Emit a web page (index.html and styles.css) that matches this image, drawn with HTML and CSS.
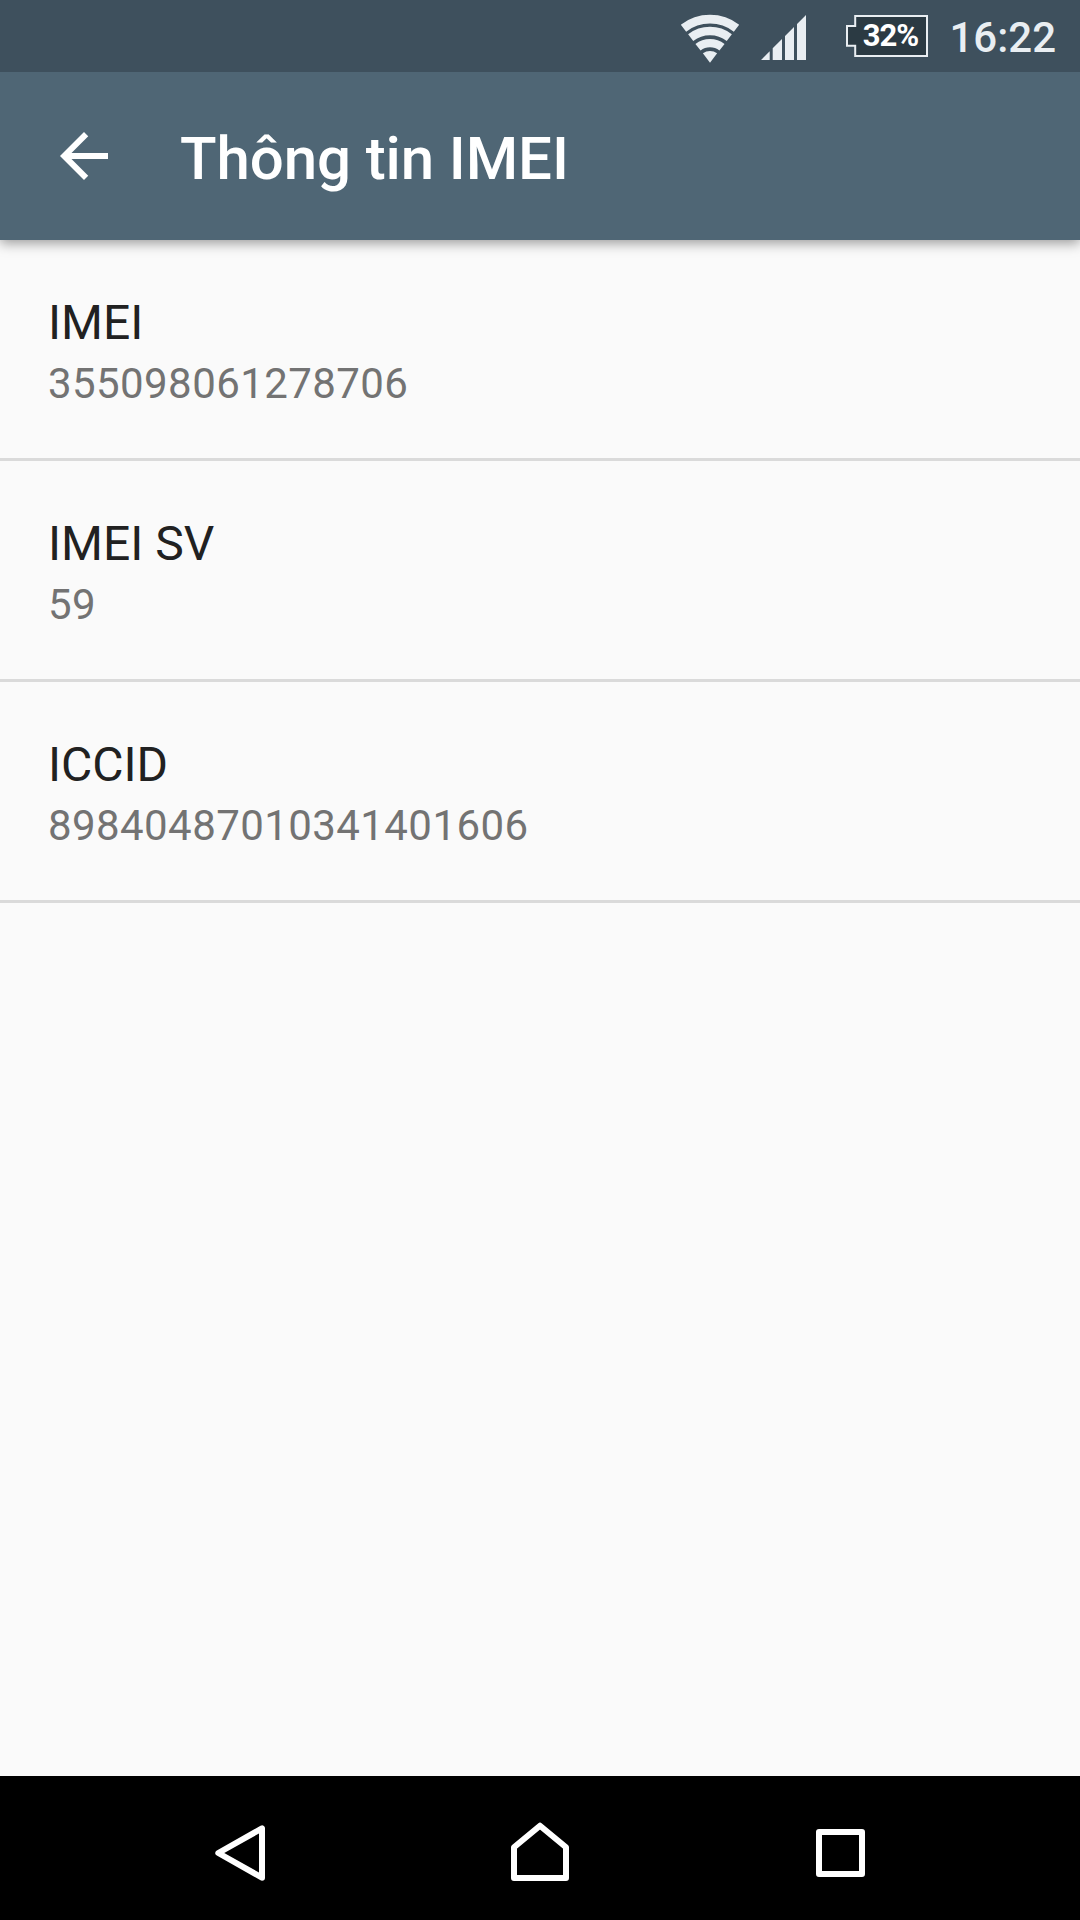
FILE: index.html
```html
<!DOCTYPE html>
<html lang="vi">
<head>
    <meta charset="UTF-8">
    <meta name="viewport" content="width=device-width, initial-scale=1.0">
    <title>Thông tin IMEI</title>
    <link rel="stylesheet" href="styles.css">
</head>
<body>

<div class="status-bar">
    <svg class="wifi" viewBox="0 0 60 50">
        <path class="arc" stroke-width="8.8" d="M3.5 14.2A43.5 43.5 0 0 1 56.5 14.2"/>
        <path class="arc" stroke-width="8.4" d="M10.7 23.6A31.7 31.7 0 0 1 49.3 23.6"/>
        <path class="arc" stroke-width="8.4" d="M18 33.2A19.6 19.6 0 0 1 42 33.2"/>
        <path d="M22.9 39.3A12 12 0 0 1 37.1 39.3L30 48.7Z"/>
    </svg>
    <svg class="signal" viewBox="0 0 46 46">
        <path d="M1 46L9.7 37.2V46ZM12.7 46V34.2L22 25V46ZM25 46V22L34 13V46ZM37 46V10L46 1V46Z"/>
    </svg>
    <div class="battery">
        <svg viewBox="0 0 82 42">
            <path d="M9.2 1H81V41H9.2V30.8H1V11H9.2Z"/>
        </svg>
        <span>32%</span>
    </div>
    <span class="clock">16:22</span>
</div>

<header>
    <svg class="back" viewBox="0 0 24 24">
        <path d="M20 11H7.83l5.59-5.59L12 4l-8 8 8 8 1.41-1.41L7.83 13H20v-2z"/>
    </svg>
    <h1>Thông tin IMEI</h1>
</header>

<main>
    <div class="item">
        <h2>IMEI</h2>
        <p>355098061278706</p>
    </div>
    <div class="item">
        <h2>IMEI SV</h2>
        <p>59</p>
    </div>
    <div class="item">
        <h2>ICCID</h2>
        <p>89840487010341401606</p>
    </div>
</main>

<nav>
    <a class="nav-button">
        <svg viewBox="0 0 72 72"><path d="M58 16.3V65.7L14.3 41Z"/></svg>
    </a>
    <a class="nav-button">
        <svg viewBox="0 0 72 72"><path d="M10 66V35.3L36 13.7L62 35.3V66Z"/></svg>
    </a>
    <a class="nav-button">
        <svg viewBox="0 0 72 72"><path d="M15 20H58V62H15Z"/></svg>
    </a>
</nav>

</body>
</html>
```
FILE: styles.css
```css
body {
    font-family: Roboto, sans-serif;
    background-color: #fafafa;
    margin: 0;
    height: 1920px;
    display: flex;
    flex-direction: column;
}

h1, h2, p {
    margin: 0;
}

svg {
    display: block;
}

.status-bar {
    height: 72px;
    box-sizing: border-box;
    padding-right: 24px;
    background-color: #3e505d;
    display: flex;
    justify-content: flex-end;
    align-items: flex-start;
    position: relative;
    z-index: 1;
}
.wifi {
    width: 60px;
    height: 50px;
    margin: 14px 20px 0 0;
    fill: #e9eef2;
}
.wifi .arc {
    fill: none;
    stroke: #e9eef2;
}
.signal {
    width: 46px;
    height: 46px;
    margin: 14px 40px 0 0;
    fill: #e9eef2;
}
.battery {
    width: 82px;
    height: 42px;
    margin: 15px 21px 0 0;
    position: relative;
}
.battery path {
    fill: #2b3a43;
    stroke: #e9eef2;
    stroke-width: 2;
}
.battery span {
    position: absolute;
    top: 0;
    left: 8px;
    width: 72px;
    text-align: center;
    font-size: 31px;
    line-height: 42px;
    letter-spacing: -1px;
    font-weight: 700;
    color: #fff;
}
.clock {
    margin-top: 13px;
    font-size: 42px;
    line-height: 50px;
    font-weight: 500;
    color: #e9eef2;
}

header {
    height: 168px;
    background-color: #4f6675;
    display: flex;
    align-items: center;
    box-shadow: 0 3px 12px rgba(0, 0, 0, 0.4);
}
.back {
    width: 72px;
    height: 72px;
    margin: 0 60px 0 48px;
    fill: #fff;
}
h1 {
    padding-top: 6px;
    font-size: 60px;
    line-height: 70px;
    letter-spacing: -0.1px;
    font-weight: 500;
    color: #fff;
}

main {
    flex: 1;
}
.item {
    height: 221px;
    padding: 55px 48px 0;
    box-sizing: border-box;
    border-bottom: 3px solid #dadada;
}
h2 {
    font-size: 48px;
    line-height: 56px;
    font-weight: 400;
    color: #212121;
}
.item p {
    margin-top: 8px;
    font-size: 42px;
    line-height: 50px;
    letter-spacing: 0.01em;
    color: #737373;
}

nav {
    height: 144px;
    background-color: #000;
    display: flex;
    justify-content: center;
}
.nav-button {
    width: 300px;
    display: flex;
    align-items: center;
    justify-content: center;
}
.nav-button svg {
    width: 72px;
    height: 72px;
    fill: none;
    stroke: #fff;
    stroke-width: 6;
    stroke-linejoin: round;
}
```
